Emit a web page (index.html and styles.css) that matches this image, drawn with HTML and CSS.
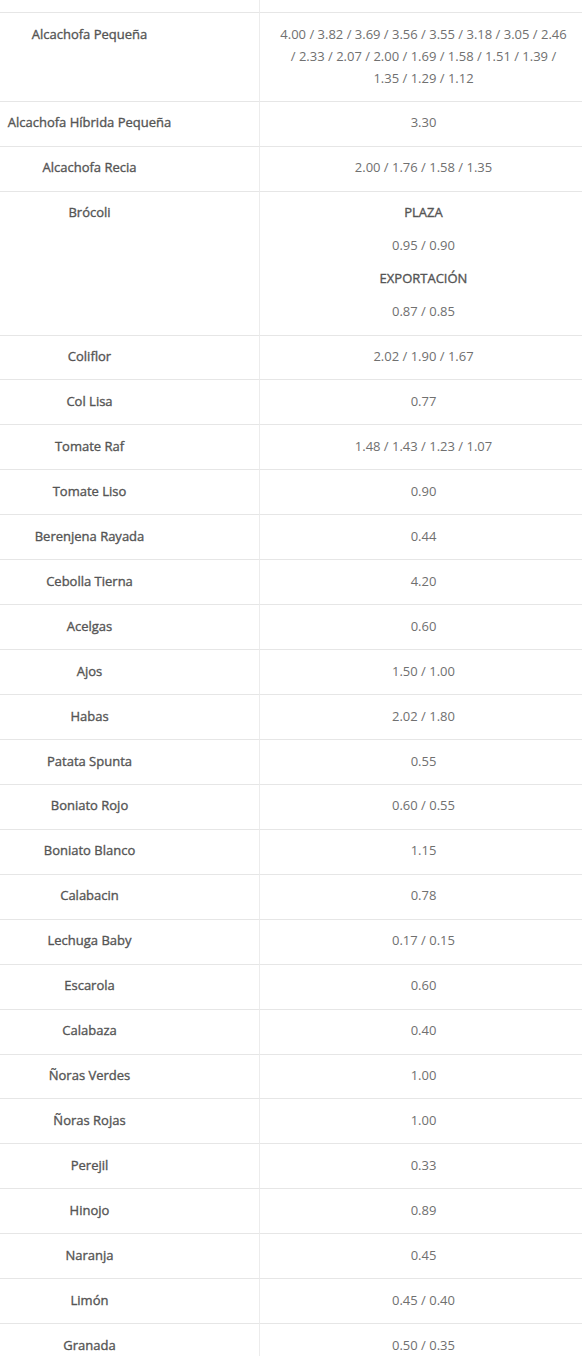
FILE: index.html
```html
<!DOCTYPE html>
<html lang="es">
<head>
<meta charset="utf-8">
<title>Precios</title>
<link rel="stylesheet" href="styles.css">
</head>
<body>
<table class="prices">
  <tbody>
    <tr class="cut"><td class="name"></td><td class="price"></td></tr>
    <tr><td class="name">Alcachofa Pequeña</td><td class="price">4.00 / 3.82 / 3.69 / 3.56 / 3.55 / 3.18 / 3.05 / 2.46<br>/ 2.33 / 2.07 / 2.00 / 1.69 / 1.58 / 1.51 / 1.39 /<br>1.35 / 1.29 / 1.12</td></tr>
    <tr><td class="name">Alcachofa Híbrida Pequeña</td><td class="price">3.30</td></tr>
    <tr><td class="name">Alcachofa Recia</td><td class="price">2.00 / 1.76 / 1.58 / 1.35</td></tr>
    <tr><td class="name">Brócoli</td><td class="price"><p class="label">PLAZA</p><p>0.95 / 0.90</p><p class="label">EXPORTACIÓN</p><p>0.87 / 0.85</p></td></tr>
    <tr><td class="name">Coliflor</td><td class="price">2.02 / 1.90 / 1.67</td></tr>
    <tr><td class="name">Col Lisa</td><td class="price">0.77</td></tr>
    <tr><td class="name">Tomate Raf</td><td class="price">1.48 / 1.43 / 1.23 / 1.07</td></tr>
    <tr><td class="name">Tomate Liso</td><td class="price">0.90</td></tr>
    <tr><td class="name">Berenjena Rayada</td><td class="price">0.44</td></tr>
    <tr><td class="name">Cebolla Tierna</td><td class="price">4.20</td></tr>
    <tr><td class="name">Acelgas</td><td class="price">0.60</td></tr>
    <tr><td class="name">Ajos</td><td class="price">1.50 / 1.00</td></tr>
    <tr><td class="name">Habas</td><td class="price">2.02 / 1.80</td></tr>
    <tr><td class="name">Patata Spunta</td><td class="price">0.55</td></tr>
    <tr><td class="name">Boniato Rojo</td><td class="price">0.60 / 0.55</td></tr>
    <tr><td class="name">Boniato Blanco</td><td class="price">1.15</td></tr>
    <tr><td class="name">Calabacin</td><td class="price">0.78</td></tr>
    <tr><td class="name">Lechuga Baby</td><td class="price">0.17 / 0.15</td></tr>
    <tr><td class="name">Escarola</td><td class="price">0.60</td></tr>
    <tr><td class="name">Calabaza</td><td class="price">0.40</td></tr>
    <tr><td class="name">Ñoras Verdes</td><td class="price">1.00</td></tr>
    <tr><td class="name">Ñoras Rojas</td><td class="price">1.00</td></tr>
    <tr><td class="name">Perejil</td><td class="price">0.33</td></tr>
    <tr><td class="name">Hinojo</td><td class="price">0.89</td></tr>
    <tr><td class="name">Naranja</td><td class="price">0.45</td></tr>
    <tr><td class="name">Limón</td><td class="price">0.45 / 0.40</td></tr>
    <tr><td class="name">Granada</td><td class="price">0.50 / 0.35</td></tr>
  </tbody>
</table>
</body>
</html>
```
FILE: styles.css
```css
html, body {
  margin: 0;
  padding: 0;
  background: #ffffff;
}

body {
  font-family: "Open Sans", "Liberation Sans", sans-serif;
  font-size: 13px;
  line-height: 21.95px;
  color: #666666;
}

.prices {
  width: 582px;
  table-layout: fixed;
  border-collapse: separate;
  border-spacing: 0;
}

.prices td {
  vertical-align: top;
  text-align: center;
  border-bottom: 1px solid #e6e6e6;
  box-sizing: border-box;
}

.name {
  width: 260px;
  padding: 10.6px 80px 11.4px 0;
  border-right: 1px solid #ececec;
  font-weight: 400;
  -webkit-text-stroke: 0.35px #555555;
  color: #555555;
}

.price {
  padding: 10.6px 10px 11.4px 15px;
  font-weight: 400;
  color: #707070;
}

.cut td {
  height: 13px;
  padding: 0;
}

.price p {
  margin: 11px 0 0;
}

.price p:first-child {
  margin-top: 0;
}

.price .label {
  -webkit-text-stroke: 0.35px #555555;
  color: #555555;
}
```
